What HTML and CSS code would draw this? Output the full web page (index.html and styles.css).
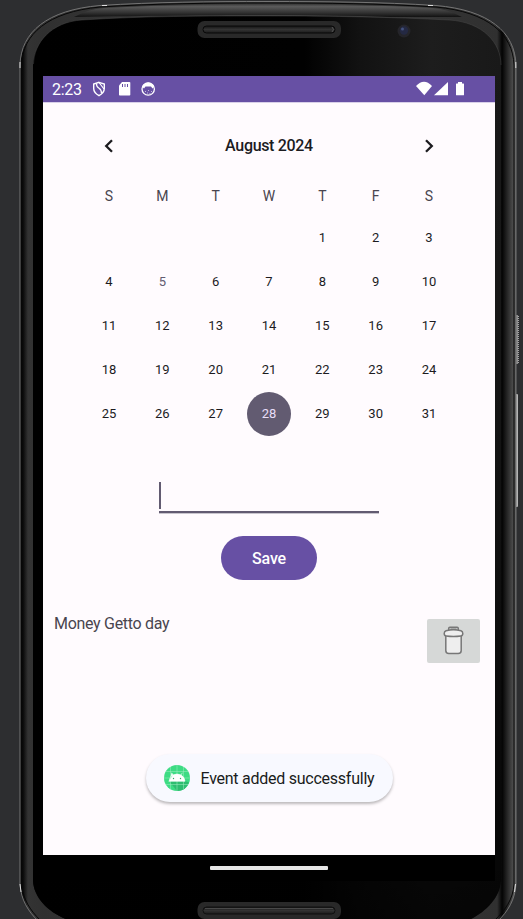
FILE: index.html
```html
<!DOCTYPE html>
<html lang="en">
<head>
<meta charset="utf-8">
<title>Calendar</title>
<link rel="stylesheet" href="styles.css">
</head>
<body>
<div class="stage">
  <svg class="device" width="523" height="919" viewBox="0 0 523 919" aria-hidden="true">
    <defs>
      <linearGradient id="glass" x1="0" x2="1"><stop offset="0" stop-color="#000"/><stop offset=".58" stop-color="#010101"/><stop offset=".7" stop-color="#121212"/><stop offset=".85" stop-color="#1d1d1d"/><stop offset="1" stop-color="#191919"/></linearGradient>
      <linearGradient id="fade" x1="0" y1="0" x2="0" y2="1"><stop offset="0" stop-color="#000" stop-opacity="0"/><stop offset=".35" stop-color="#000" stop-opacity=".1"/><stop offset="1" stop-color="#000" stop-opacity=".8"/></linearGradient>
      <linearGradient id="rim" gradientUnits="userSpaceOnUse" x1="19" x2="517" y1="0" y2="0"><stop offset="0" stop-color="#080808"/><stop offset=".008" stop-color="#090909"/><stop offset=".018" stop-color="#333"/><stop offset=".05" stop-color="#303030"/><stop offset=".5" stop-color="#3c3c3c"/><stop offset=".96" stop-color="#303030"/><stop offset=".97" stop-color="#030303"/><stop offset=".98" stop-color="#252525"/><stop offset="1" stop-color="#666"/></linearGradient>
      <linearGradient id="toprim" gradientUnits="userSpaceOnUse" x1="0" x2="0" y1="1" y2="17"><stop offset="0" stop-color="#171717"/><stop offset=".35" stop-color="#5b5b5b"/><stop offset=".75" stop-color="#303030"/><stop offset="1" stop-color="#111"/></linearGradient>
      <linearGradient id="grille" x1="0" x2="0" y1="0" y2="1"><stop offset="0" stop-color="#141414"/><stop offset=".5" stop-color="#333"/><stop offset="1" stop-color="#1c1c1c"/></linearGradient>
    </defs>
    <rect x="515" y="315" width="3" height="49" fill="#888"/>
    <path d="M518.3 316v48" stroke="#c4c4c4" stroke-dasharray="1 1"/>
    <rect x="515" y="394" width="3" height="113" rx="1" fill="#b5b5b5"/>
    <path d="M20 65C21 32 47 10 100 5.500C155 2 210 1.500 268 1.500S381 2 436 5.500C489 10 515 32 516 65V884C515 900 508 911 498 921H38C28 911 21 900 20 884Z" fill="url(#rim)"/>
    <path d="M74 17Q88 9 104 8C200 3 336 3 432 8Q448 9 462 17C440 17 425 17 390 17C300 14 220 15 74 17Z" fill="url(#toprim)"/>
    <path d="M20 65C21 32 47 10 100 5.500C155 2 210 1.500 268 1.500S381 2 436 5.500C489 10 515 32 516 65V884C515 900 508 911 498 921M20 65V884C21 900 28 911 38 921" fill="none" stroke="#747474"/>
    <path d="M21.500 65C22.500 34 48 12 100 7C155 3.500 210 3 268 3S381 3.500 436 7C488 12 513 34 514 65V884C513 900 505 910 495 920M21.500 65V884C23 900 31 911 40 920" fill="none" stroke="#070707"/>
    <path d="M33 65C34 43 51 22 82 20C145 16 200 16 268 16S390 17 449 20C483 22 501 43 501 65V881C500 899 483 914 467 921H71C50 914 34 899 33 881Z" fill="url(#glass)"/>
    <path d="M33 65C34 43 51 22 82 20C145 16 200 16 268 16S390 17 449 20C483 22 501 43 501 65V881C500 899 483 914 467 921H71C50 914 34 899 33 881Z" fill="url(#fade)"/>
    <path d="M33.500 64C34 43 51 22 82 20C145 16 200 16 268 16S390 17 449 20C483 22 501 43 501 65" fill="none" stroke="#505050" stroke-width=".4"/>
    <path d="M20 62v6M515.800 62v6M20 884l1 8M515.500 884l-1 8M102 5.500h5M428 5.500h5" fill="none" stroke="#ddd"/>
    <rect x="197.500" y="21" width="143.500" height="17" rx="7" fill="#292929"/>
    <rect x="203" y="26" width="132" height="7" rx="3.500" fill="url(#grille)" stroke="#090909"/>
    <path d="M332 27q3 2.500 0 5" fill="none" stroke="#555"/>
    <circle cx="404" cy="31" r="6.500" fill="#25252a"/><circle cx="404" cy="30.500" r="4.200" fill="#242943"/><circle cx="402.500" cy="29" r="1.500" fill="#44527d"/>
    <rect x="43" y="854" width="452" height="27" fill="#000"/>
    <rect x="197.500" y="902" width="143.500" height="17" rx="7" fill="#292929"/>
    <rect x="203" y="907" width="132" height="7" rx="3.500" fill="url(#grille)" stroke="#111"/>
    <path d="M205 908.500h128" stroke="#484848"/>
  </svg>

  <main class="screen">
    <header class="status">
      <span class="clock">2:23</span>
      <svg class="notices" width="64" height="16" viewBox="0 0 64 16" fill="none" stroke="#fff">
        <path d="M7 1.300 12.300 3v4.500q0 4.200-5.300 7.200Q1.700 11.700 1.700 7.500V3Z" stroke-width="1.400"/><path d="M4.500 2.500q-.3 3 2.500 4.800t2.400 5M7 1.500 12 8" stroke-width="1.200"/>
        <path d="M30 1h7.500q.8 0 .8.800v12q0 .8-.8.800h-9.700q-.8 0-.8-.8V4.500Z" fill="#fff" stroke="none"/><path d="M30.500 3v3M33 3v3M35.500 3v3" stroke="#6750a4"/>
        <circle cx="56.200" cy="8" r="6.200" stroke-width="1.300"/><path d="M50.500 5Q53 1.500 56.200 1.500T62 5V6L60.500 7.500 59 5.500H53.500L52 7.500 50.500 6Z" fill="#fff" stroke="none"/><path d="M53 10.500h1M56 9.500h1M59 10.500h1M55 12h1M57.500 12.500h1" stroke-width=".6"/>
      </svg>
      <svg class="system" width="50" height="16" viewBox="0 0 50 16" fill="#fff">
        <path d="M0 5Q8-3.500 16 5L8.300 14.300Z"/><path d="M18 14.300 32 1V14.300Z"/><path d="M42 1h4v1.500h1.500q.5 0 .5.500v10.700q0 .6-.6.600h-6.800q-.6 0-.6-.6V3q0-.5.500-.5H42Z"/>
      </svg>
    </header>

    <section class="calendar">
      <div class="month">
        <svg width="12" height="14" viewBox="0 0 12 14"><path d="M9 1.200 3.200 7 9 12.800"/></svg>
        <h1>August 2024</h1>
        <svg width="12" height="14" viewBox="0 0 12 14"><path d="M3 1.200 8.800 7 3 12.800"/></svg>
      </div>
      <div class="weekdays"><span>S</span><span>M</span><span>T</span><span>W</span><span>T</span><span>F</span><span>S</span></div>
      <div class="days">
        <span class="first">1</span><span>2</span><span>3</span>
        <span>4</span><span class="today">5</span><span>6</span><span>7</span><span>8</span><span>9</span><span>10</span>
        <span>11</span><span>12</span><span>13</span><span>14</span><span>15</span><span>16</span><span>17</span>
        <span>18</span><span>19</span><span>20</span><span>21</span><span>22</span><span>23</span><span>24</span>
        <span>25</span><span>26</span><span>27</span><span class="selected">28</span><span>29</span><span>30</span><span>31</span>
      </div>
    </section>

    <div class="field"><i class="caret"></i></div>
    <button class="save">Save</button>

    <div class="event">
      <p>Money Getto day</p>
      <button class="delete" aria-label="Delete">
        <svg width="22" height="30" viewBox="0 0 22 30" fill="#eee" stroke="#777" stroke-width="1.500">
          <path d="M2.800 9v15.500q0 3 3 3h9.400q3 0 3-3V9Z"/>
          <path d="M3 4.700Q10.500 3 18 4.700q1.800.5 1.800 2.800 0 2.200-2 2.500Q10.500 11 3.200 10 1.200 9.700 1.200 7.500T3 4.700Z"/>
          <path d="M5.700 4.500V2.400q0-1.200 1.200-1.200h7.200q1.200 0 1.200 1.200v2.100" fill="none"/><path d="M8.200 4V3.300h4.600V4" fill="none"/>
        </svg>
      </button>
    </div>

    <div class="toast">
      <svg width="26" height="26" viewBox="0 0 26 26">
        <circle cx="13" cy="13" r="13" fill="#3ddc84"/>
        <path d="M5 16h16l4 1.500Q22 26 13 26Z" fill="#2ebd70"/>
        <path d="M6.500 2v22M13 0v26M19.500 2v22M2 6.500h22M0 13h26M2 19.500h22" stroke="#a1edc2" stroke-width=".5"/>
        <path d="M5 16.300q.5-4.500 4-6.300L7.700 7.800M17 10l1.300-2.200M5 16.300h16q-.5-4.500-4-6.300Q13 8 9 10Z" fill="#fff" stroke="#fff" stroke-width=".6"/>
        <circle cx="9.500" cy="13.500" r=".7" fill="#35aa6b"/><circle cx="16.500" cy="13.500" r=".7" fill="#35aa6b"/>
      </svg>
      <span>Event added successfully</span>
    </div>
  </main>
  <div class="home"></div>
</div>
</body>
</html>
```
FILE: styles.css
```css
* { box-sizing: border-box; }
body { margin: 0; background: #2d2e30; font-family: Roboto, sans-serif; color: #1c1b1f; }
.stage { position: relative; width: 523px; height: 919px; overflow: hidden; padding: 76px 28px 0 43px; }
.device { position: absolute; inset: 0; }
.screen { position: relative; display: flex; flex-direction: column; align-items: center; width: 452px; height: 778.5px; background: #fffbfe; }
.status { display: flex; align-items: center; align-self: stretch; height: 26.500px; flex: none; padding: 0 29px 0 9px; background: #6750a4; border-bottom: 1px solid #d9d0e9; color: #fff; }
.clock { width: 40.500px; padding-top: 2px; font-size: 16px; letter-spacing: -.25px; }
.notices { margin-left: -.5px; }
.system { margin-left: auto; }
.calendar { width: 373.3px; }
.month { display: flex; align-items: center; justify-content: space-between; height: 86px; padding: 0 20.600px; }
.month svg { fill: none; stroke: #1c1b1f; stroke-width: 2.300; }
.month h1 { margin: 0; font-size: 16px; font-weight: 500; letter-spacing: -.32px; }
.weekdays, .days { display: grid; grid-template-columns: repeat(7, 1fr); place-items: center; }
.weekdays { height: 26px; margin-top: -6px; color: #49454f; font-size: 14px; }
.days { grid-auto-rows: 44px; margin-top: 7.500px; font-size: 13px; }
.days span { padding-bottom: 1px; }
.first { grid-column: 5; }
.days .today { color: #625b71; }
.days .selected { display: grid; place-items: center; width: 44px; height: 44px; border-radius: 50%; background: #625b71; color: #e8def8; }
.field { width: 220px; height: 31px; margin-top: 45.500px; flex: none; border-bottom: 2px solid #625b71; box-shadow: 0 1px #c9c5ce; }
.caret { display: block; width: 2px; height: 27px; background: #625b71; }
.save { width: 96.500px; height: 44px; margin-top: 23.500px; flex: none; border: 0; border-radius: 22px; padding: 1px 0 0; background: #6750a4; color: #fff; font: 500 16px Roboto, sans-serif; letter-spacing: -.2px; }
.event { display: flex; justify-content: space-between; align-self: stretch; margin-top: 35px; padding: 0 15px 0 11px; color: #49454f; font-size: 16px; letter-spacing: -.3px; }
.event p { margin: 0; line-height: 18px; }
.delete { display: grid; place-items: center; width: 53px; height: 44px; margin-top: 4px; padding: 0; border: 0; border-radius: 2px; background: #d6d8d7; }
.toast { display: flex; align-items: center; gap: 11px; width: 247px; height: 48px; margin-top: 91px; padding-left: 18px; border-radius: 24px; background: #f8f9ff; box-shadow: 0 2px 3px #0004; color: #191c20; font-size: 16px; letter-spacing: -.25px; white-space: nowrap; }
.home { position: relative; width: 118px; height: 4px; margin: 11px auto 0 167px; border-radius: 1px; background: #e6e6e6; }
```
